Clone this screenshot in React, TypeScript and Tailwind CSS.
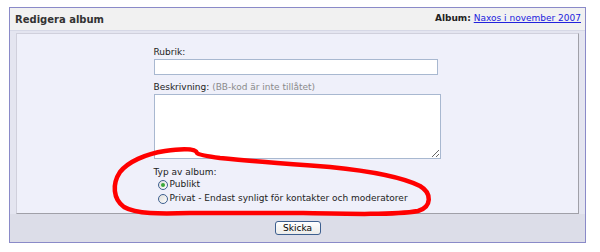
import React from "react";

function Radio({ checked }: { checked?: boolean }) {
  return (
    <span className="inline-flex h-[10px] w-[10px] shrink-0 items-center justify-center rounded-full border border-[#3d5f8f] bg-gradient-to-br from-[#dcdcd8] to-white">
      {checked ? <span className="h-[4px] w-[4px] rounded-full bg-[#3aa83a]" /> : null}
    </span>
  );
}

export default function App() {
  return (
    <div className="relative h-[252px] w-[600px] bg-white pl-[9px] pt-[7px] text-[9px] text-[#222] [font-family:'DejaVu_Sans',Verdana,sans-serif]">
      <div className="flex h-[236px] w-[577px] flex-col border border-[#8a8ac8]">
        <div className="flex h-[23px] shrink-0 items-center justify-between border-b border-[#d6d8e6] bg-[#f1f1f1] pl-[5px] pr-[4px]">
          <span className="text-[10px] font-bold text-[#333]">Redigera album</span>
          <span>
            <span className="font-bold text-[#222]">Album:</span>{" "}
            <a href="#" className="text-[#2222dd] underline">Naxos i november 2007</a>
          </span>
        </div>
        <div className="shrink-0 bg-[#e4e5f0] px-[6px] pt-[2px]">
          <div className="h-[181px] overflow-hidden border border-b-[#a0a0a8] border-l-[#d0d0dc] border-r-[#a0a0a8] border-t-[#d0d0dc] bg-[#eff0fa]">
            <div className="mx-auto flex w-[288px] flex-col pt-[12px]">
              <label className="leading-[12px]">Rubrik:</label>
              <input className="mt-[1px] h-[16px] w-[284px] border border-[#a8b8d0] bg-white p-0" />
              <div className="mt-[6px] leading-[12px]">
                Beskrivning: <span className="text-[#8a8a8a]">(BB-kod är inte tillåtet)</span>
              </div>
              <textarea className="mt-[1px] block h-[65px] w-[287px] border border-[#a8b8d0] bg-white p-0" />
              <div className="mt-[7px] leading-[12px]">Typ av album:</div>
              <div className="flex h-[14px] items-center gap-[2px] pl-[4px]">
                <Radio checked />
                <span>Publikt</span>
              </div>
              <div className="flex h-[14px] items-center gap-[2px] pl-[4px]">
                <Radio />
                <span>Privat - Endast synligt för kontakter och moderatorer</span>
              </div>
            </div>
          </div>
        </div>
        <div className="flex flex-1 items-center justify-center bg-[#dcdde8]">
          <button className="h-[14px] w-[46px] rounded-[3px] border border-[#3d5f8f] bg-gradient-to-b from-white to-[#ececea] text-[9px] leading-[12px] text-black">
            Skicka
          </button>
        </div>
      </div>
      <svg className="pointer-events-none absolute left-0 top-0" width="600" height="252" viewBox="0 0 600 252">
        <path
          d="M197,153 C196,149 185,148 165,151 C145,154 128,162 120,172 C112,184 113,199 124,207 C136,214 160,214 190,213 L300,213 C350,214 395,215 418,211 C432,207 432,193 420,186 C400,176 370,171 330,167 C290,164 250,161 220,158 C205,156 199,155 197,153 Z"
          fill="none"
          stroke="#ff0000"
          strokeWidth="4.5"
          strokeLinecap="round"
          strokeLinejoin="round"
        />
      </svg>
    </div>
  );
}
